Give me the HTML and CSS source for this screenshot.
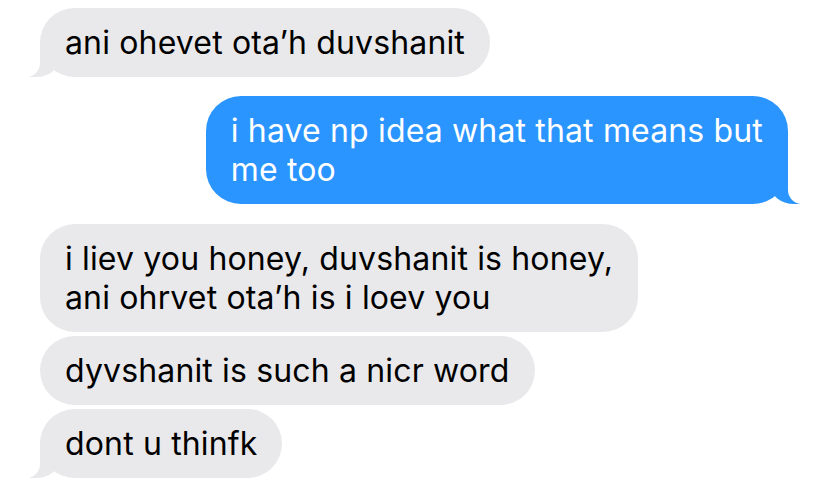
FILE: index.html
```html
<!DOCTYPE html>
<html lang="en">
<head>
    <meta charset="UTF-8">
    <meta name="viewport" content="width=device-width, initial-scale=1.0">
    <title>Messages</title>
    <link rel="stylesheet" href="styles.css">
</head>
<body>
    <div class="thread">
        <div class="bubble them tail">ani ohevet ota’h duvshanit</div>
        <div class="bubble me tail">i have np idea what that means but<br>me too</div>
        <div class="group">
            <div class="bubble them">i liev you honey, duvshanit is honey,<br>ani ohrvet ota’h is i loev you</div>
            <div class="bubble them">dyvshanit is such a nicr word</div>
            <div class="bubble them tail">dont u thinfk</div>
        </div>
    </div>
</body>
</html>
```

FILE: styles.css
```css
body {
    margin: 0;
    background: #fff;
    font-family: Inter, "Liberation Sans", sans-serif;
}
.thread {
    display: flex;
    flex-direction: column;
    gap: 19px;
    padding: 8px 40px 0 40px;
}
.group {
    display: flex;
    flex-direction: column;
    gap: 4px;
    margin-top: 1px;
}
.bubble {
    position: relative;
    padding: 15px 25px;
    font-size: 32px;
    line-height: 39px;
    letter-spacing: 0.15px;
    border-radius: 35px;
    white-space: nowrap;
}
.them {
    align-self: flex-start;
    background: #e9e9eb;
    color: #000;
}
.me {
    align-self: flex-end;
    background: #2a95fe;
    color: #fff;
}
.tail::before,
.tail::after {
    content: "";
    position: absolute;
    bottom: 0;
    height: 36px;
}
.them.tail::before {
    left: -10px;
    width: 30px;
    background: #e9e9eb;
    border-bottom-right-radius: 24px 20px;
}
.them.tail::after {
    left: -36px;
    width: 36px;
    background: #fff;
    border-bottom-right-radius: 14px;
}
.me.tail::before {
    right: -12px;
    width: 30px;
    background: #2a95fe;
    border-bottom-left-radius: 24px 20px;
}
.me.tail::after {
    right: -36px;
    width: 36px;
    background: #fff;
    border-bottom-left-radius: 14px;
}
```
